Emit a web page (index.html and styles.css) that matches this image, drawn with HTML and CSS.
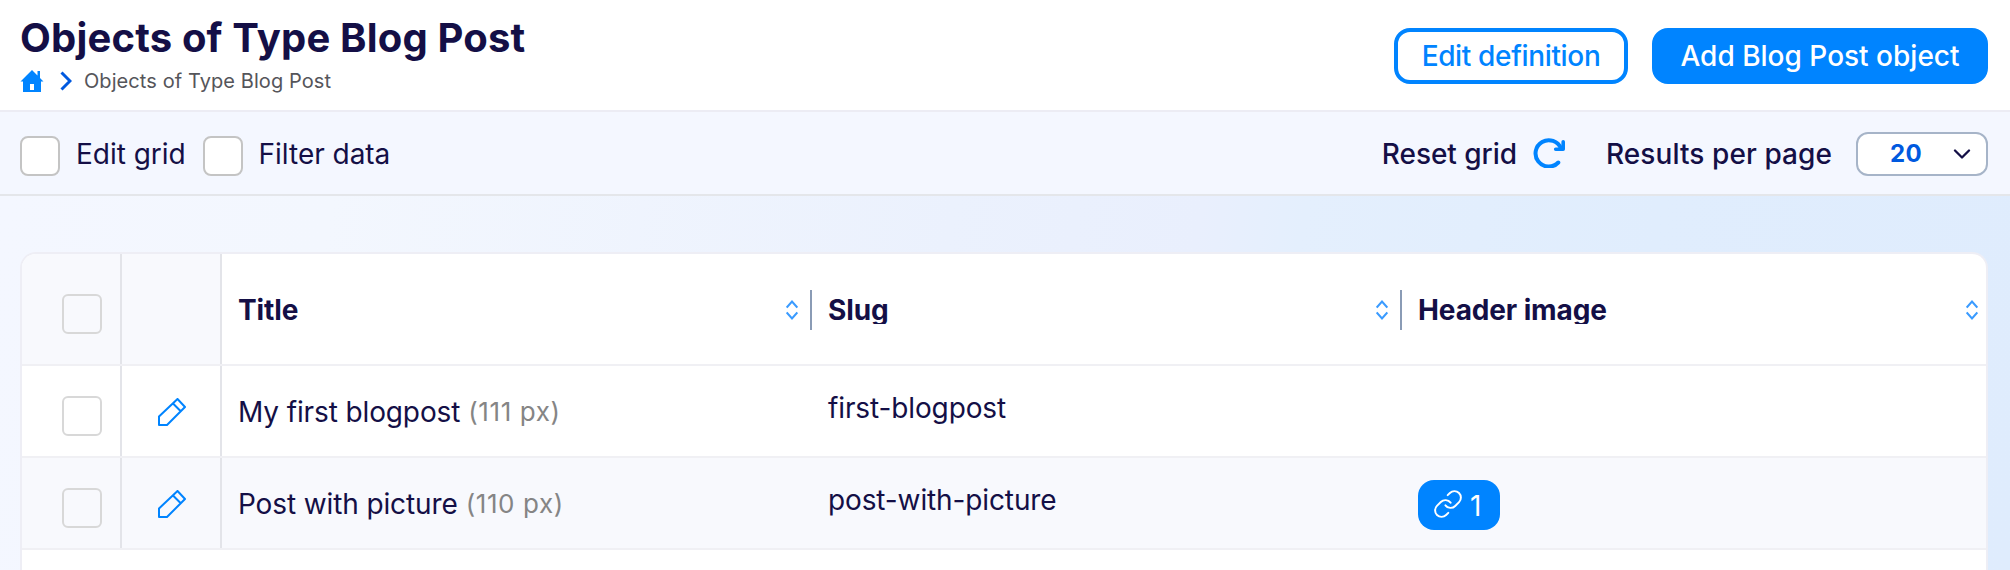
FILE: index.html
```html
<!DOCTYPE html>
<html lang="en">
<head>
<meta charset="utf-8">
<title>Objects of Type Blog Post</title>
<link rel="stylesheet" href="styles.css">
</head>
<body>
<header class="header">
  <div class="heading">
    <h1 class="title">Objects of Type Blog Post</h1>
    <nav class="crumbs">
      <svg class="home" viewBox="0 0 24 22"><path fill="#0084ff" fill-rule="evenodd" d="M12 0 17.500 5.500V1H20v7l3.500 3.500H21V22H3V11.500H.5zM10 14v6h4v-6z"/></svg>
      <svg class="crumb-arrow" viewBox="0 0 12 20"><path d="M1.500 1.500 10 10l-8.500 8.500" fill="none" stroke="#0059df" stroke-width="3"/></svg>
      <span class="crumb">Objects of Type Blog Post</span>
    </nav>
  </div>
  <div class="actions">
    <button class="btn btn-outline">Edit definition</button>
    <button class="btn btn-primary">Add Blog Post object</button>
  </div>
</header>
<section class="toolbar">
  <label class="toggle"><span class="box"></span><span>Edit grid</span></label>
  <label class="toggle toggle-filter"><span class="box"></span><span>Filter data</span></label>
  <div class="tools">
    <span class="reset">Reset grid</span>
    <svg class="reload" viewBox="0 0 32 30"><path d="M25.300 24.500A13.200 13.200 0 1 1 28 10.500" fill="none" stroke="#0084ff" stroke-width="4" stroke-linecap="round"/><path d="M30.200 3.800v7.500h-7.500" fill="none" stroke="#0084ff" stroke-width="3.600" stroke-linecap="round" stroke-linejoin="round"/></svg>
    <span class="per-page">Results per page</span>
    <div class="select"><span class="select-value">20</span><svg class="select-arrow" viewBox="0 0 18 10"><path d="m2 1.500 7 7 7-7" fill="none" stroke="#140f46" stroke-width="2.300" stroke-linecap="round" stroke-linejoin="round"/></svg></div>
  </div>
</section>
<main class="content">
  <div class="grid">
    <div class="row row-head">
      <div class="cell cell-check"><span class="box box-light"></span></div>
      <div class="cell cell-edit"></div>
      <div class="cell head"><span class="head-text">Title</span><svg class="sort" viewBox="0 0 12 20"><path d="m.7 7.500 5.300-6 5.300 6M.7 12.500l5.300 6 5.300-6"/></svg><i class="sep"></i></div>
      <div class="cell head"><span class="head-text">Slug</span><svg class="sort" viewBox="0 0 12 20"><path d="m.7 7.500 5.300-6 5.300 6M.7 12.500l5.300 6 5.300-6"/></svg><i class="sep"></i></div>
      <div class="cell head"><span class="head-text">Header image</span><svg class="sort" viewBox="0 0 12 20"><path d="m.7 7.500 5.300-6 5.300 6M.7 12.500l5.300 6 5.300-6"/></svg></div>
    </div>
    <div class="row">
      <div class="cell cell-check"><span class="box box-light"></span></div>
      <div class="cell cell-edit"><svg class="pencil" viewBox="0 0 28 28"><path d="M1 27v-8.500L19.500 1 27 9 9 27zM15 5.500l8 8"/></svg></div>
      <div class="cell"><span>My first blogpost</span><span class="px">(111 px)</span></div>
      <div class="cell cell-slug"><span>first-blogpost</span></div>
      <div class="cell"></div>
    </div>
    <div class="row row-alt">
      <div class="cell cell-check"><span class="box box-light"></span></div>
      <div class="cell cell-edit"><svg class="pencil" viewBox="0 0 28 28"><path d="M1 27v-8.500L19.500 1 27 9 9 27zM15 5.500l8 8"/></svg></div>
      <div class="cell"><span>Post with picture</span><span class="px">(110 px)</span></div>
      <div class="cell cell-slug"><span>post-with-picture</span></div>
      <div class="cell"><span class="badge"><svg class="link" viewBox="1.200 1.200 21.600 21.600"><path d="M10 13a5 5 0 0 0 7.540.54l3-3a5 5 0 0 0-7.070-7.070l-1.720 1.710"/><path d="M14 11a5 5 0 0 0-7.540-.54l-3 3a5 5 0 0 0 7.070 7.070l1.710-1.710"/></svg><span>1</span></span></div>
    </div>
  </div>
</main>
</body>
</html>
```
FILE: styles.css
```css
* { box-sizing: border-box; }
body {
  margin: 0;
  width: 2010px;
  height: 570px;
  overflow: hidden;
  display: flex;
  flex-direction: column;
  font: 28px/36px Inter, "Liberation Sans", sans-serif;
  color: #140f46;
  background: #f4f7ff;
}
svg { display: block; flex: none; }
.header {
  flex: none;
  height: 112px;
  background: #fff;
  border-bottom: 2px solid #ececf4;
  display: flex;
  justify-content: space-between;
  padding: 14px 22px 0 20px;
}
.title { margin: 0; font-size: 40px; line-height: 48px; font-weight: 700; letter-spacing: .18px; white-space: nowrap; }
.crumbs { display: flex; align-items: center; height: 24px; margin-top: 7px; }
.home { width: 24px; height: 22px; }
.crumb-arrow { width: 12px; height: 20px; margin-left: 16px; }
.crumb { margin-left: 12px; font-size: 20px; line-height: 24px; color: #55555a; letter-spacing: .08px; }
.actions { display: flex; gap: 24px; padding-top: 14px; }
.btn {
  height: 56px;
  border-radius: 16px;
  border: 4px solid #0084ff;
  font: 500 28px/36px Inter, "Liberation Sans", sans-serif;
  padding: 0;
}
.btn-outline { width: 234px; background: #fff; color: #0084ff; letter-spacing: -.35px; }
.btn-primary { width: 336px; background: #0084ff; color: #fff; }
.toolbar {
  flex: none;
  height: 84px;
  background: #f4f7ff;
  border-bottom: 2px solid #e4e6ea;
  display: flex;
  align-items: center;
  padding: 2px 22px 0 20px;
}
.toggle { display: flex; align-items: center; gap: 16px; height: 40px; margin-top: 4px; line-height: 40px; letter-spacing: -.03px; }
.toggle > span:last-child { margin-top: -4px; }
.toggle-filter { margin-left: 17px; }
.box { flex: none; width: 40px; height: 40px; background: #fff; border: 2px solid #c4c4c4; border-radius: 8px; }
.box-light { background: transparent; border-color: #d8d8d8; border-radius: 6px; }
.tools { display: flex; align-items: center; margin-left: auto; font-weight: 500; height: 44px; }
.reset { letter-spacing: -.05px; }
.reload { width: 32px; height: 30px; margin: -2px 0 0 16px; overflow: hidden; }
.per-page { margin-left: 41px; letter-spacing: .08px; }
.select {
  width: 132px;
  height: 44px;
  margin-left: 24px;
  border: 2px solid #a6b4c8;
  border-radius: 12px;
  background: #fff;
  display: flex;
  align-items: center;
  padding-left: 32px;
}
.select-value { width: 63px; font-size: 24px; font-weight: 700; color: #0059df; letter-spacing: .3px; }
.select-arrow { width: 18px; height: 10px; }
.content {
  flex: 1;
  min-height: 0;
  padding: 56px 22px 0 20px;
  background: linear-gradient(100deg, #f4f7ff 0%, #f3f7fe 16%, #ebf1fd 46%, #e9effd 58%, #e4effd 63%, #e0edfd 80%, #dfecfd 100%);
}
.grid {
  height: 100%;
  background: #fff;
  border: 2px solid #eeeef5;
  border-bottom: 0;
  border-radius: 16px 16px 0 0;
  overflow: hidden;
}
.row {
  display: grid;
  grid-template-columns: 100px 100px 590px 590px 584px;
  height: 92px;
  border-bottom: 2px solid #f0f0f4;
}
.row-head { height: 112px; }
.row-alt { background: #f8f9fd; }
.cell { display: flex; align-items: center; padding: 2px 0 0 16px; white-space: nowrap; letter-spacing: -.12px; }
.cell-check, .cell-edit { border-right: 2px solid #e3e4e9; }
.cell-check { padding: 10px 0 0 40px; }
.cell-edit { padding: 2px 0 0 36px; }
.row-head .cell-check, .row-head .cell-edit { background: #f8f9fd; }
.head { font-weight: 700; }
.head-text { height: 28px; line-height: 28px; overflow: hidden; }
.sort { width: 12px; height: 20px; margin-left: auto; margin-right: 12px; fill: none; stroke: #3a9bff; stroke-width: 2; }
.sep { width: 2px; height: 40px; background: #8a9bb5; }
.head:last-child .sort { margin-right: 8px; }
.pencil { width: 28px; height: 28px; fill: none; stroke: #0084ff; stroke-width: 2; stroke-linejoin: round; }
.px { margin-left: 8px; font-size: 26px; color: #858585; letter-spacing: .6px; }
.cell-slug { padding-top: 0; padding-bottom: 6px; }
.badge {
  display: flex;
  align-items: center;
  width: 82px;
  height: 50px;
  margin-top: 2px;
  padding-left: 16px;
  gap: 8px;
  border-radius: 16px;
  background: #0084ff;
  color: #fff;
}
.badge > span { margin-top: 2px; }
.link { width: 28px; height: 28px; margin-top: -2px; fill: none; stroke: #fff; stroke-width: 1.5; stroke-linecap: round; stroke-linejoin: round; }
```
